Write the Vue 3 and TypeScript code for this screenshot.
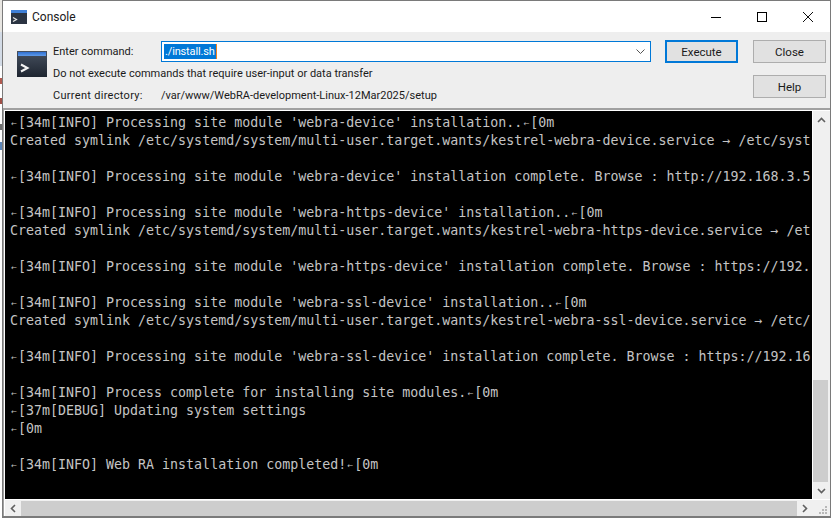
<script setup lang="ts">
const lines: string[] = [
  "←[34m[INFO] Processing site module 'webra-device' installation..←[0m",
  'Created symlink /etc/systemd/system/multi-user.target.wants/kestrel-webra-device.service → /etc/syst',
  '',
  "←[34m[INFO] Processing site module 'webra-device' installation complete. Browse : http://192.168.3.5",
  '',
  "←[34m[INFO] Processing site module 'webra-https-device' installation..←[0m",
  'Created symlink /etc/systemd/system/multi-user.target.wants/kestrel-webra-https-device.service → /et',
  '',
  "←[34m[INFO] Processing site module 'webra-https-device' installation complete. Browse : https://192.",
  '',
  "←[34m[INFO] Processing site module 'webra-ssl-device' installation..←[0m",
  'Created symlink /etc/systemd/system/multi-user.target.wants/kestrel-webra-ssl-device.service → /etc/',
  '',
  "←[34m[INFO] Processing site module 'webra-ssl-device' installation complete. Browse : https://192.16",
  '',
  '←[34m[INFO] Process complete for installing site modules.←[0m',
  '←[37m[DEBUG] Updating system settings',
  '←[0m',
  '',
  '←[34m[INFO] Web RA installation completed!←[0m',
]
const parts = (line: string): string[] => line.split('←')
</script>

<template>
  <div class="screen">
    <div class="edge"></div>
    <div class="window">
      <header class="titlebar">
        <svg class="app-icon small" viewBox="0 0 16 14" width="16" height="14">
          <rect width="16" height="14" fill="#2b3442" />
          <rect width="16" height="3" fill="#3f7fd6" />
          <path d="M2 7.5 L5.5 9.5 L2 11.5" fill="none" stroke="#e6e6e6" stroke-width="1.2" />
        </svg>
        <span class="title">Console</span>
        <div class="controls">
          <span class="ctrl">
            <svg viewBox="0 0 10 10" width="10" height="10"><path d="M0 5.5H10" stroke="#000" stroke-width="1" /></svg>
          </span>
          <span class="ctrl">
            <svg viewBox="0 0 10 10" width="10" height="10"><rect x=".5" y=".5" width="9" height="9" fill="none" stroke="#000" /></svg>
          </span>
          <span class="ctrl">
            <svg viewBox="0 0 10 10" width="10" height="10"><path d="M0 0L10 10M10 0L0 10" stroke="#111" stroke-width="1" /></svg>
          </span>
        </div>
      </header>

      <section class="toolbar">
        <svg class="app-icon large" viewBox="0 0 30 26" width="30" height="26">
          <defs>
            <linearGradient id="body" x1="0" y1="0" x2="0" y2="1">
              <stop offset="0" stop-color="#46505f" />
              <stop offset="1" stop-color="#1e2530" />
            </linearGradient>
            <linearGradient id="band" x1="0" y1="0" x2="0" y2="1">
              <stop offset="0" stop-color="#2f6fd0" />
              <stop offset="1" stop-color="#5f9ae8" />
            </linearGradient>
          </defs>
          <rect width="30" height="26" fill="url(#body)" />
          <rect x="1" y="1" width="28" height="4" fill="url(#band)" />
          <path d="M4 13.5 L10.5 17 L4 20.5" fill="none" stroke="#f4f4f4" stroke-width="2" />
        </svg>
        <div class="form">
          <span class="label">Enter command:</span>
          <div class="combo">
            <span class="selected">./install.sh</span>
            <svg class="chev" viewBox="0 0 9 5" width="9" height="5"><path d="M.5 .5L4.5 4.5L8.5 .5" fill="none" stroke="#555" /></svg>
          </div>
          <span class="label wide">Do not execute commands that require user-input or data transfer</span>
          <span class="label dir">Current directory:</span>
          <span class="label">/var/www/WebRA-development-Linux-12Mar2025/setup</span>
        </div>
        <button class="btn primary" type="button">Execute</button>
        <div class="side">
          <button class="btn" type="button">Close</button>
          <button class="btn" type="button">Help</button>
        </div>
      </section>

      <section class="frame">
        <div class="upper">
          <div class="term">
            <div v-for="(line, i) in lines" :key="i" class="line"><template v-for="(part, j) in parts(line)" :key="j"><span v-if="j > 0" class="esc">←</span>{{ part }}</template></div>
          </div>
          <div class="vbar">
            <span class="sb-btn">
              <svg viewBox="0 0 9 6" width="9" height="6"><path d="M1 5L4.5 1.5L8 5" fill="none" stroke="#606060" stroke-width="1.6" /></svg>
            </span>
            <span class="vspace"></span>
            <span class="vthumb"></span>
            <span class="sb-btn">
              <svg viewBox="0 0 9 6" width="9" height="6"><path d="M1 1L4.5 4.5L8 1" fill="none" stroke="#606060" stroke-width="1.6" /></svg>
            </span>
          </div>
        </div>
        <div class="hbar">
          <span class="sb-btn">
            <svg viewBox="0 0 6 9" width="6" height="9"><path d="M5 1L1.5 4.5L5 8" fill="none" stroke="#606060" stroke-width="1.6" /></svg>
          </span>
          <span class="hthumb"></span>
          <span class="sb-btn">
            <svg viewBox="0 0 6 9" width="6" height="9"><path d="M1 1L4.5 4.5L1 8" fill="none" stroke="#606060" stroke-width="1.6" /></svg>
          </span>
          <span class="grip">
            <svg viewBox="0 0 8 8" width="8" height="8" fill="#b8b8b8">
              <rect x="6" y="0" width="2" height="2" />
              <rect x="3" y="3" width="2" height="2" />
              <rect x="6" y="3" width="2" height="2" />
              <rect x="0" y="6" width="2" height="2" />
              <rect x="3" y="6" width="2" height="2" />
              <rect x="6" y="6" width="2" height="2" />
            </svg>
          </span>
        </div>
      </section>
    </div>
  </div>
</template>

<style>
html,
body {
  margin: 0;
  background: #ffffff;
}
</style>

<style scoped>
.screen {
  width: 831px;
  height: 518px;
  display: flex;
  overflow: hidden;
  font-family: Roboto, 'Open Sans', sans-serif;
  font-size: 11.5px;
  color: #1a1a1a;
}
.edge {
  width: 2px;
  flex: none;
  background: linear-gradient(#e8e6e2 0 32px, #d3dbe6 32px 66px, #ffffff 66px 78px, #b05a50 78px 84px, #ffffff 84px 98px, #a05048 98px 104px, #ffffff 104px 124px, #6f6f6f 124px 130px, #ffffff 130px 142px, #5d86b8 142px 150px, #ffffff 150px);
}
.window {
  flex: 1;
  min-width: 0;
  display: flex;
  flex-direction: column;
  border: 1px solid #7a7a7a;
  border-bottom-width: 2px;
  box-sizing: border-box;
  background: #f0f0f0;
}
.titlebar {
  height: 31px;
  flex: none;
  display: flex;
  align-items: center;
  background: #ffffff;
  padding-left: 8px;
}
.app-icon {
  flex: none;
  display: block;
}
.title {
  margin-left: 5px;
  font-size: 12px;
}
.controls {
  margin-left: auto;
  margin-right: -1px;
  display: flex;
}
.ctrl {
  width: 46px;
  height: 31px;
  display: flex;
  align-items: center;
  justify-content: center;
}
.toolbar {
  height: 76px;
  flex: none;
  box-sizing: border-box;
  display: flex;
  align-items: flex-start;
  padding-top: 8px;
  background: #eeeeee;
}
.large {
  margin: 11px 6px 0 14px;
}
.form {
  width: 598px;
  flex: none;
  display: grid;
  grid-template-columns: 108px 490px;
  grid-template-rows: 23px 20px 24px;
  align-items: center;
  font-size: 11px;
}
.label {
  white-space: nowrap;
}
.dir {
  letter-spacing: 0.3px;
}
.wide {
  grid-column: 1 / 3;
}
.combo {
  height: 21px;
  box-sizing: border-box;
  border: 1px solid #0078d7;
  background: #ffffff;
  display: flex;
  align-items: center;
  padding: 0 5px 0 2px;
}
.selected {
  background: #0078d7;
  color: #ffffff;
  line-height: 15px;
  padding: 0 1px;
  border-right: 1px solid #f08020;
  letter-spacing: -0.15px;
}
.chev {
  margin-left: auto;
}
.btn {
  width: 73px;
  height: 23px;
  box-sizing: border-box;
  border: 1px solid #adadad;
  background: #e1e1e1;
  padding: 0;
  font: inherit;
  color: inherit;
}
.primary {
  margin-left: 14px;
  border: 2px solid #0078d7;
}
.side {
  margin-left: 15px;
  display: flex;
  flex-direction: column;
  gap: 12px;
}
.frame {
  flex: 1;
  min-height: 0;
  display: flex;
  flex-direction: column;
  border-top: 2px solid #a0a0a0;
  border-left: 1px solid #a0a0a0;
  padding-left: 1px;
  background: #ffffff;
}
.upper {
  flex: 1;
  min-height: 0;
  display: flex;
  border-top: 1px solid #ffffff;
}
.term {
  flex: 1;
  min-width: 0;
  background: #000000;
  padding: 3px 0 0 5px;
  box-sizing: border-box;
}
.line {
  height: 18px;
  line-height: 18px;
  white-space: pre;
  font-family: 'DejaVu Sans Mono', 'Liberation Mono', monospace;
  font-size: 13.3px;
  color: #c4c4c4;
}
.esc {
  display: inline-block;
  width: 8px;
  font-family: 'DejaVu Sans', sans-serif;
  font-size: 7px;
  line-height: 12px;
  text-align: center;
  vertical-align: 1px;
}
.vbar {
  width: 18px;
  flex: none;
  display: flex;
  flex-direction: column;
  border-left: 1px solid #ffffff;
  box-sizing: border-box;
  background: #f0f0f0;
}
.sb-btn {
  width: 16px;
  height: 17px;
  flex: none;
  display: flex;
  align-items: center;
  justify-content: center;
}
.vspace {
  flex: 1;
}
.vthumb {
  height: 102px;
  flex: none;
  width: 15px;
  background: #cdcdcd;
}
.hbar {
  height: 17px;
  flex: none;
  display: flex;
  align-items: center;
  border-top: 1px solid #ffffff;
  box-sizing: border-box;
  background: #f0f0f0;
}
.hthumb {
  flex: 1;
  height: 15px;
  background: #cdcdcd;
}
.grip {
  width: 17px;
  height: 16px;
  flex: none;
  display: flex;
  align-items: flex-end;
  justify-content: flex-end;
  padding: 0 3px 2px 0;
  box-sizing: border-box;
}
</style>
